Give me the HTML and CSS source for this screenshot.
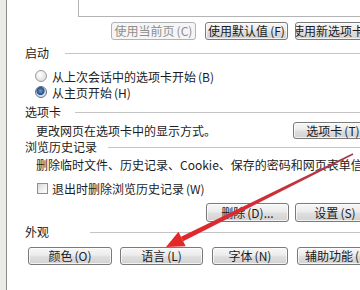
FILE: index.html
```html
<!DOCTYPE html>
<html lang="zh-CN">
<head>
<meta charset="utf-8">
<title>Internet 选项</title>
<link rel="stylesheet" href="styles.css">
</head>
<body>
<div class="page">
  <div class="strip"></div>
  <div class="edge"></div>
  <div class="content">
    <div class="homebox"></div>
    <div class="btnrow row-home">
      <div class="btn disabled w-cur">使用当前页<span class="k">(C)</span></div>
      <div class="btn w-def">使用默认值<span class="k">(F)</span></div>
      <div class="btn w-new">使用新选项卡<span class="k">(U)</span></div>
    </div>

    <div class="group g-start"><span class="gtitle">启动</span><span class="gline"></span></div>
    <div class="opt"><span class="radio"></span><span>从上次会话中的选项卡开始<span class="k">(B)</span></span></div>
    <div class="opt"><span class="radio on"></span><span>从主页开始<span class="k">(H)</span></span></div>

    <div class="group g-tabs"><span class="gtitle">选项卡</span><span class="gline"></span></div>
    <div class="tabrow">
      <span class="desc">更改网页在选项卡中的显示方式。</span>
      <div class="btn w-tabs">选项卡<span class="k">(T)</span></div>
    </div>

    <div class="group g-hist"><span class="gtitle">浏览历史记录</span><span class="gline"></span></div>
    <div class="textrow">删除临时文件、历史记录、Cookie、保存的密码和网页表单信息。</div>
    <div class="chkrow"><span class="chk"></span><span>退出时删除浏览历史记录<span class="k">(W)</span></span></div>
    <div class="btnrow row-hist">
      <div class="btn w-del">删除<span class="k">(D)...</span></div>
      <div class="btn w-set">设置<span class="k">(S)</span></div>
    </div>

    <div class="group g-look"><span class="gtitle">外观</span><span class="gline"></span></div>
    <div class="btnrow row-look">
      <div class="btn w-color">颜色<span class="k">(O)</span></div>
      <div class="btn w-lang">语言<span class="k">(L)</span></div>
      <div class="btn w-font">字体<span class="k">(N)</span></div>
      <div class="btn w-acc">辅助功能<span class="k">(E)</span></div>
    </div>
  </div>
</div>
<svg class="arrow" width="360" height="290" viewBox="0 0 360 290" aria-hidden="true">
  <defs>
    <linearGradient id="ag" x1="353" y1="154" x2="170" y2="245" gradientUnits="userSpaceOnUse">
      <stop offset="0" stop-color="#9c3b4e"/>
      <stop offset="0.35" stop-color="#c9303a"/>
      <stop offset="1" stop-color="#e3282a"/>
    </linearGradient>
  </defs>
  <polygon fill="url(#ag)" points="352.7,153.3 353.3,154.7 183.2,241.2 181,236.8"/>
  <polygon fill="#e3282a" points="166,247 178.5,231.8 185.7,246.2"/>
</svg>
</body>
</html>
```
FILE: styles.css
```css
html, body {
  margin: 0;
  padding: 0;
}
body {
  width: 360px;
  height: 290px;
  overflow: hidden;
  position: relative;
  background: #ffffff;
  font-family: "Noto Sans CJK SC", "Noto Sans", sans-serif;
  font-size: 12px;
  color: #1c1c1c;
}
.page {
  display: flex;
  height: 290px;
}
.strip {
  flex: none;
  width: 6px;
  background: #ebebe8;
}
.edge {
  flex: none;
  width: 1px;
  background: #8c8c8c;
}
.content {
  flex: none;
  width: 420px;
}
.k {
  padding-left: 2px;
}
.homebox {
  margin-left: 71px;
  height: 16px;
  border: 1px solid #b4b4b4;
  border-top: none;
  border-right: none;
  background: #fff;
}
.btnrow {
  display: flex;
  height: 18px;
}
.row-home { margin-top: 5px; padding-left: 104px; }
.row-home .w-cur { width: 85px; }
.row-home .w-def { width: 83px; margin-left: 9px; }
.row-home .w-new { width: 85px; margin-left: 7px; }

.btn {
  box-sizing: border-box;
  flex: none;
  height: 100%;
  display: flex;
  align-items: center;
  justify-content: center;
  white-space: nowrap;
  overflow: hidden;
  border: 1px solid #7a7a7a;
  border-radius: 3px;
  background: linear-gradient(#f7f7f7 0%, #ececec 45%, #dedede 55%, #d2d2d2 100%);
  box-shadow: inset 0 0 0 1px rgba(255,255,255,0.7);
  color: #1a1a1a;
  line-height: 1;
}
.btn.disabled {
  border-color: #afb3b6;
  background: #f5f5f5;
  box-shadow: none;
  color: #8e8e8e;
}
.group {
  display: flex;
  align-items: center;
  height: 14px;
  padding-left: 18px;
}
.gtitle {
  flex: none;
  line-height: 14px;
}
.gline {
  flex: 1;
  height: 1px;
  background: #c4c4c4;
}
.g-start { margin-top: 6px; }
.g-start .gline { margin-left: 16px; }
.g-tabs { margin-top: 5px; }
.g-tabs .gline { margin-left: 14px; }
.g-hist { margin-top: 1px; }
.g-hist .gline { margin-left: 11px; }
.g-look { margin-top: 3px; }
.g-look .gline { margin-left: 41px; }

.opt {
  display: flex;
  align-items: center;
  height: 16px;
  padding-left: 28px;
  gap: 5px;
  white-space: nowrap;
}
.g-start + .opt { margin-top: 8px; }
.radio {
  flex: none;
  box-sizing: border-box;
  width: 12px;
  height: 12px;
  border-radius: 50%;
  border: 1px solid #9a9a9a;
  background: radial-gradient(circle at 40% 35%, #ffffff 0%, #e6e6e6 60%, #cfcfcf 100%);
}
.radio.on {
  border-color: #5b6f88;
  background: radial-gradient(circle at 45% 40%, #6f9bd4 0%, #254d86 45%, #d6dde6 55%, #eef1f4 100%);
}
.tabrow {
  display: flex;
  align-items: center;
  height: 17px;
  margin-top: 3px;
  padding-left: 29px;
  white-space: nowrap;
}
.desc {
  flex: none;
  width: 257px;
}
.tabrow .w-tabs { width: 80px; }
.textrow {
  height: 16px;
  line-height: 16px;
  margin-top: 3px;
  padding-left: 29px;
  white-space: nowrap;
}
.chkrow {
  display: flex;
  align-items: center;
  height: 16px;
  margin-top: 7px;
  padding-left: 30px;
  gap: 4px;
  white-space: nowrap;
}
.chk {
  flex: none;
  box-sizing: border-box;
  width: 11px;
  height: 11px;
  border: 1px solid #8e8f8f;
  background: linear-gradient(135deg, #d9d9d9 0%, #f2f2f2 60%, #ffffff 100%);
}
.row-hist { margin-top: 7px; height: 19px; padding-left: 199px; }
.row-hist .w-del { width: 83px; }
.row-hist .w-set { width: 80px; margin-left: 6px; }
.row-look { margin-top: 8px; padding-left: 21px; }
.row-look .w-color { width: 84px; }
.row-look .w-lang { width: 83px; margin-left: 8px; }
.row-look .w-font { width: 76px; margin-left: 9px; }
.row-look .w-acc { width: 80px; margin-left: 9px; justify-content: flex-start; padding-left: 7px; }
.arrow {
  position: absolute;
  left: 0;
  top: 0;
  pointer-events: none;
}
```
